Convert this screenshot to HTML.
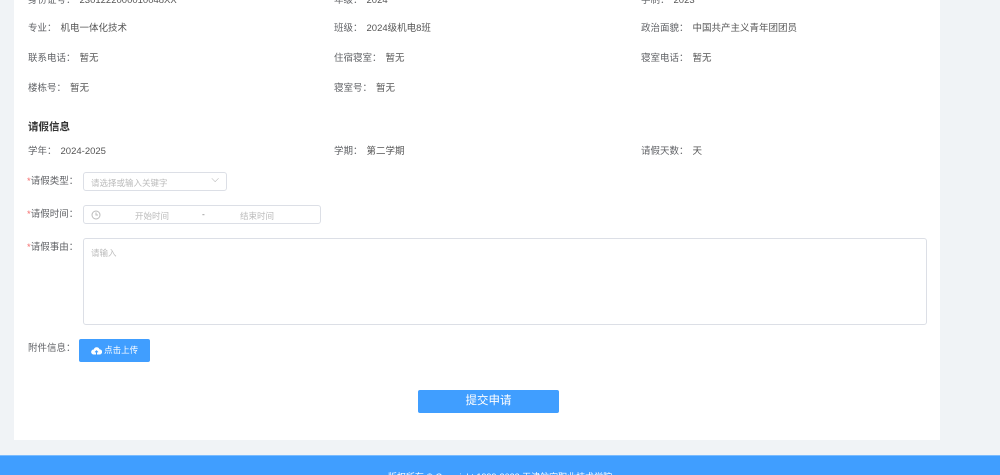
<!DOCTYPE html>
<html><head><meta charset="utf-8"><style>
*{margin:0;padding:0;box-sizing:border-box}
html,body{width:1000px;height:475px;overflow:hidden}
body{background:#f0f3f6;font-family:"Liberation Sans","Noto Sans CJK SC",sans-serif;font-size:9.5px;color:#555;position:relative}
.card{position:absolute;left:14px;top:-10px;width:926px;height:450px;background:#fff}
.t{position:absolute;white-space:nowrap;color:#606266;line-height:12px;margin-top:2px}
.t b{font-weight:normal;margin-left:4px;color:#555}
.h{position:absolute;left:28px;top:119px;font-weight:bold;color:#333;font-size:10.5px}
.req{color:#f56c6c}
.box{position:absolute;border:1px solid #dcdfe6;border-radius:3px;background:#fff;color:#bbb;font-size:8.5px}
.btn{position:absolute;background:#409eff;color:#fff;border-radius:2px;text-align:center}
.footer{position:absolute;left:0;top:455px;width:1000px;height:20px;overflow:hidden;background:#409eff;border-top:1px solid #79bbff;color:#fff;font-size:9px;line-height:12px;text-align:center;padding-top:15px}
</style></head><body>
<div class="card"></div>
<div class="t" style="left:28px;top:-7px">身份证号：<b>2301222000010048XX</b></div>
<div class="t" style="left:334px;top:-7px">年级：<b>2024</b></div>
<div class="t" style="left:641px;top:-7px">学制：<b>2023</b></div>
<div class="t" style="left:28px;top:21px">专业：<b>机电一体化技术</b></div>
<div class="t" style="left:334px;top:21px">班级：<b>2024级机电8班</b></div>
<div class="t" style="left:641px;top:21px">政治面貌：<b>中国共产主义青年团团员</b></div>
<div class="t" style="left:28px;top:51px">联系电话：<b>暂无</b></div>
<div class="t" style="left:334px;top:51px">住宿寝室：<b>暂无</b></div>
<div class="t" style="left:641px;top:51px">寝室电话：<b>暂无</b></div>
<div class="t" style="left:28px;top:81px">楼栋号：<b>暂无</b></div>
<div class="t" style="left:334px;top:81px">寝室号：<b>暂无</b></div>
<div class="h">请假信息</div>
<div class="t" style="left:28px;top:144px">学年：<b>2024-2025</b></div>
<div class="t" style="left:334px;top:144px">学期：<b>第二学期</b></div>
<div class="t" style="left:641px;top:144px">请假天数：<b>天</b></div>
<div class="t" style="left:27px;top:174px"><span class="req">*</span>请假类型：</div>
<div class="box" style="left:83px;top:172px;width:144px;height:19px;padding:4px 7px">请选择或输入关键字<span style="position:absolute;right:7px;top:1px;font-size:10px;color:#aaa">⌵</span></div>
<div class="t" style="left:27px;top:207px"><span class="req">*</span>请假时间：</div>
<div class="box" style="left:83px;top:205px;width:238px;height:19px">
<svg style="position:absolute;left:7px;top:4px" width="10" height="10" viewBox="0 0 10 10"><circle cx="5" cy="5" r="4" fill="none" stroke="#bbb"/><path d="M5 2.5V5h2" fill="none" stroke="#bbb"/></svg>
<span style="position:absolute;left:51px;top:4px">开始时间</span><span style="position:absolute;left:118px;top:3px;color:#777">-</span><span style="position:absolute;left:156px;top:4px">结束时间</span></div>
<div class="t" style="left:27px;top:240px"><span class="req">*</span>请假事由：</div>
<div class="box" style="left:83px;top:238px;width:844px;height:87px;padding:8px 7px">请输入</div>
<div class="t" style="left:28px;top:341px">附件信息：</div>
<div class="btn" style="left:79px;top:339px;width:71px;height:23px;font-size:8.5px;line-height:23px">
<svg style="vertical-align:-2px" width="11" height="9" viewBox="0 0 11 9"><path d="M3 8.5H2.5A2.5 2.5 0 0 1 2.8 3.5 3 3 0 0 1 8.5 3.2 2.6 2.6 0 0 1 8.5 8.5H8Z" fill="#fff"/><path d="M5.5 8.5V5M4 6.3 5.5 4.8 7 6.3" stroke="#409eff" fill="none"/></svg> 点击上传</div>
<div class="btn" style="left:418px;top:390px;width:141px;height:23px;font-size:11.5px;line-height:23px">提交申请</div>
<div class="footer">版权所有 © Copyright 1999-2023 天津航空职业技术学院</div>
</body></html>
